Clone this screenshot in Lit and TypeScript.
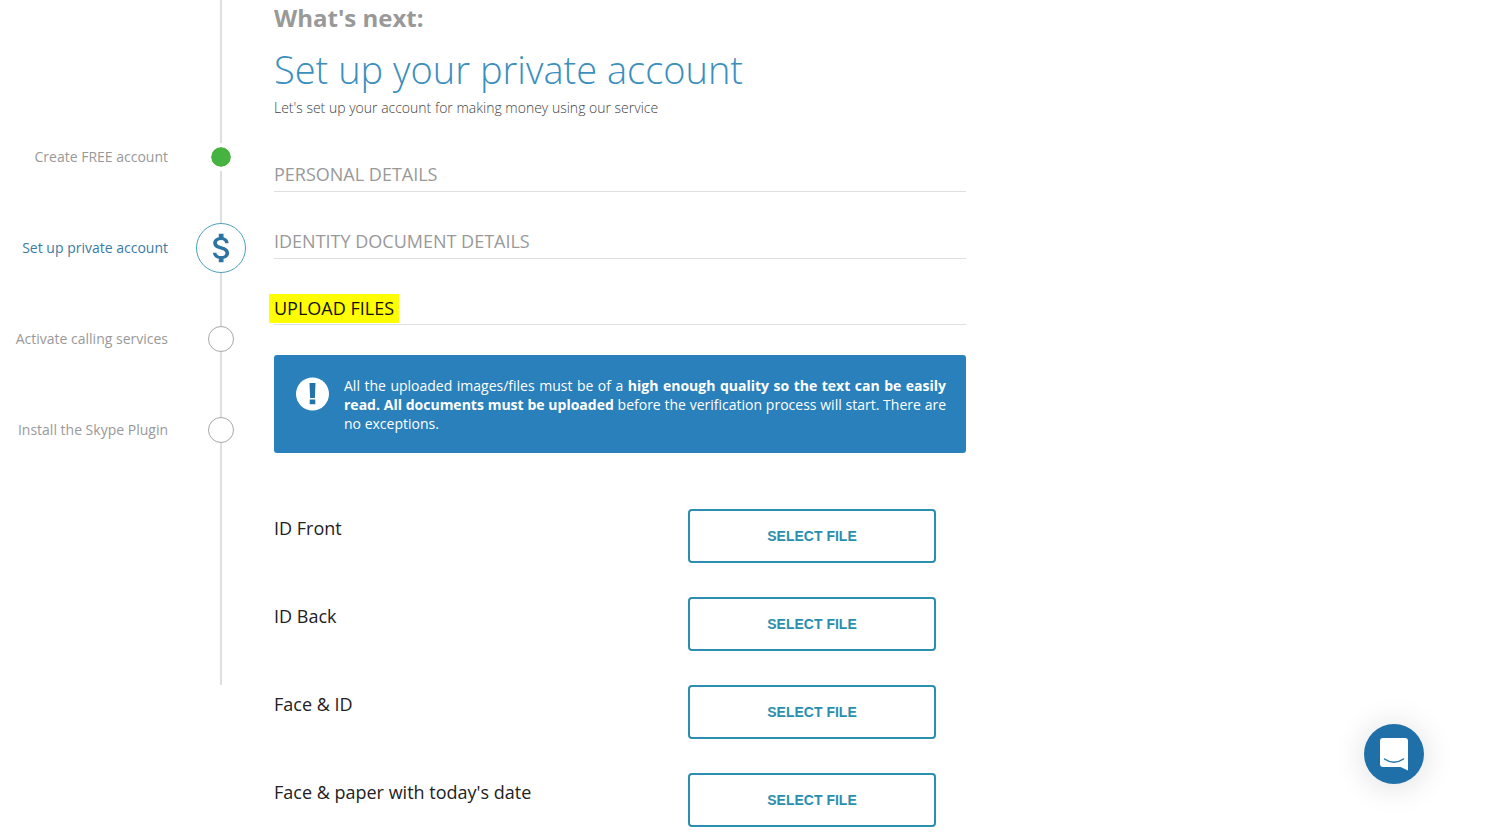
import { LitElement, html, css, svg } from "lit";
import { customElement } from "lit/decorators.js";
import { classMap } from "lit/directives/class-map.js";

type StepState = "done" | "current" | "todo";

const steps: { label: string; state: StepState }[] = [
  { label: "Create FREE account", state: "done" },
  { label: "Set up private account", state: "current" },
  { label: "Activate calling services", state: "todo" },
  { label: "Install the Skype Plugin", state: "todo" },
];

const files = ["ID Front", "ID Back", "Face & ID", "Face & paper with today's date"];

const dollar = svg`<path fill="currentColor" d="M11.8 10.9c-2.27-.59-3-1.2-3-2.15 0-1.09 1.01-1.85 2.7-1.85 1.78 0 2.44.85 2.5 2.1h2.21c-.07-1.72-1.12-3.3-3.21-3.81V3h-3v2.16c-1.94.42-3.5 1.68-3.5 3.61 0 2.31 1.91 3.46 4.7 4.13 2.5.6 3 1.48 3 2.41 0 .69-.49 1.79-2.7 1.79-2.06 0-2.87-.92-2.98-2.1h-2.2c.12 2.19 1.76 3.42 3.68 3.83V21h3v-2.15c1.95-.37 3.5-1.5 3.5-3.55 0-2.84-2.43-3.81-4.7-4.4z"/>`;

@customElement("step-timeline")
export class StepTimeline extends LitElement {
  static styles = css`
    :host {
      display: block;
    }
    .steps {
      box-sizing: border-box;
      height: 685px;
      margin: 0;
      padding: 111px 0 0;
      list-style: none;
      background: linear-gradient(#dcdedf, #dcdedf) no-repeat right 24px top / 2px 100%;
    }
    .step {
      display: grid;
      grid-template-columns: 1fr 50px;
      column-gap: 28px;
      align-items: center;
      height: 91px;
      color: #999;
      font-size: 14px;
      line-height: 20px;
      text-align: right;
    }
    .label {
      color: inherit;
      text-decoration: none;
      white-space: nowrap;
    }
    .marker {
      box-sizing: border-box;
      display: grid;
      place-items: center;
      justify-self: center;
      width: 26px;
      height: 26px;
      border: 1px solid #a8a8a8;
      border-radius: 50%;
      background: #fff;
    }
    .done .marker {
      border: 3px solid #fff;
      background: #46b340;
      background-clip: padding-box;
      box-shadow: 0 0 0 1px #fff;
    }
    .current {
      color: #3a7ca5;
    }
    .current .marker {
      width: 50px;
      height: 50px;
      border-color: #4aa0b8;
      color: #2e74a3;
    }
    .glyph {
      width: 38px;
      height: 38px;
    }
  `;

  render() {
    return html`
      <ol class="steps">
        ${steps.map(
          (s) => html`
            <li class=${classMap({ step: true, [s.state]: true })}>
              <a class="label" href="#">${s.label}</a>
              <span class="marker">
                ${s.state === "current"
                  ? html`<svg class="glyph" viewBox="-0.6 0 24 24" aria-hidden="true">${dollar}</svg>`
                  : ""}
              </span>
            </li>
          `
        )}
      </ol>
    `;
  }
}

@customElement("app-root")
export class AppRoot extends LitElement {
  static styles = css`
    :host {
      display: block;
      font-family: "Open Sans", "Noto Sans", sans-serif;
      color: #333;
      background: #fff;
    }
    .page {
      display: grid;
      grid-template-columns: 246px minmax(0, 692px);
      column-gap: 28px;
      align-items: start;
    }
    .kicker {
      margin: 0;
      padding-top: 1px;
      font-size: 24px;
      line-height: 34px;
      font-weight: 700;
      color: #999;
    }
    .title {
      margin: 8px 0 0;
      font-size: 38px;
      line-height: 52px;
      font-weight: 300;
      color: #3a8fbe;
    }
    .lead {
      margin: 3px 0 0;
      font-size: 14px;
      line-height: 20px;
      font-weight: 300;
      color: #444;
    }
    .section {
      margin: 32px 0 0;
      padding: 8px 0;
      border-bottom: 1px solid #dfdfdf;
      font-size: 18px;
      line-height: 18px;
      font-weight: 400;
      color: #999;
    }
    .lead + .section {
      margin-top: 39px;
    }
    .active {
      margin-top: 35px;
      padding: 0 0 1px;
      line-height: 29px;
    }
    .mark {
      display: inline-block;
      margin-left: -5px;
      padding: 0 5px;
      background: #ff0;
      color: #111;
    }
    .notice {
      display: grid;
      grid-template-columns: 34px 1fr;
      column-gap: 14px;
      margin-top: 30px;
      padding: 21px 20px 20px 22px;
      border-radius: 3px;
      background: #2980bb;
      color: #fff;
      font-size: 14px;
      line-height: 19px;
    }
    .notice-icon {
      width: 34px;
      height: 34px;
      margin-top: 1px;
    }
    .notice-text {
      margin: 0;
      text-align: justify;
    }
    .uploads {
      display: grid;
      row-gap: 34px;
      margin: 56px 0 0;
      padding: 0 30px 0 0;
      list-style: none;
    }
    .upload {
      display: flex;
      justify-content: space-between;
      align-items: flex-start;
    }
    .file-label {
      font-size: 18px;
      line-height: 38px;
      color: #222;
    }
    .select {
      box-sizing: border-box;
      width: 248px;
      height: 54px;
      border: 2px solid #2a8fae;
      border-radius: 4px;
      background: #fff;
      color: #2a8fae;
      font: 700 14px "Liberation Sans", Arial, sans-serif;
      text-transform: uppercase;
      cursor: pointer;
    }
    .chat {
      position: fixed;
      right: 68px;
      bottom: 50px;
      display: grid;
      place-items: center;
      width: 60px;
      height: 60px;
      padding: 0;
      border: 0;
      border-radius: 50%;
      background: #1f70a9;
      box-shadow: 0 2px 32px rgba(0, 0, 0, 0.14);
      cursor: pointer;
    }
    .chat-icon {
      width: 30px;
      height: 34px;
    }
  `;

  render() {
    return html`
      <div class="page">
        <step-timeline></step-timeline>
        <main>
          <p class="kicker">What's next:</p>
          <h1 class="title">Set up your private account</h1>
          <p class="lead">Let's set up your account for making money using our service</p>

          <h2 class="section">PERSONAL DETAILS</h2>
          <h2 class="section">IDENTITY DOCUMENT DETAILS</h2>
          <h2 class="section active"><span class="mark">UPLOAD FILES</span></h2>

          <div class="notice">
            <svg class="notice-icon" viewBox="0 0 34 34" aria-hidden="true">
              <circle cx="16.5" cy="17" r="16.5" fill="#fff" />
              <path fill="#2473a8" d="M13.500 6h6l-.6 15h-4.8zM13.700 22.600h5.600v4.600h-5.600z" />
            </svg>
            <p class="notice-text">
              All the uploaded images/files must be of a
              <strong>high enough quality so the text can be easily read. All documents must be uploaded</strong>
              before the verification process will start. There are no exceptions.
            </p>
          </div>

          <ul class="uploads">
            ${files.map(
              (name, i) => html`
                <li class="upload">
                  <span class="file-label" id="file-${i}">${name}</span>
                  <button class="select" type="button" aria-describedby="file-${i}">Select file</button>
                </li>
              `
            )}
          </ul>
        </main>
      </div>

      <button class="chat" type="button" aria-label="Open chat">
        <svg class="chat-icon" viewBox="0 0 30 34" aria-hidden="true">
          <path fill="#fff" d="M4 1h22a3 3 0 0 1 3 3v29.500l-7.500-3.500H4a3 3 0 0 1-3-3V4a3 3 0 0 1 3-3z" />
          <path fill="none" stroke="#1f70a9" stroke-width="1.500" stroke-linecap="round" d="M5.500 22q9.500 6.500 19 0" />
        </svg>
      </button>
    `;
  }
}
